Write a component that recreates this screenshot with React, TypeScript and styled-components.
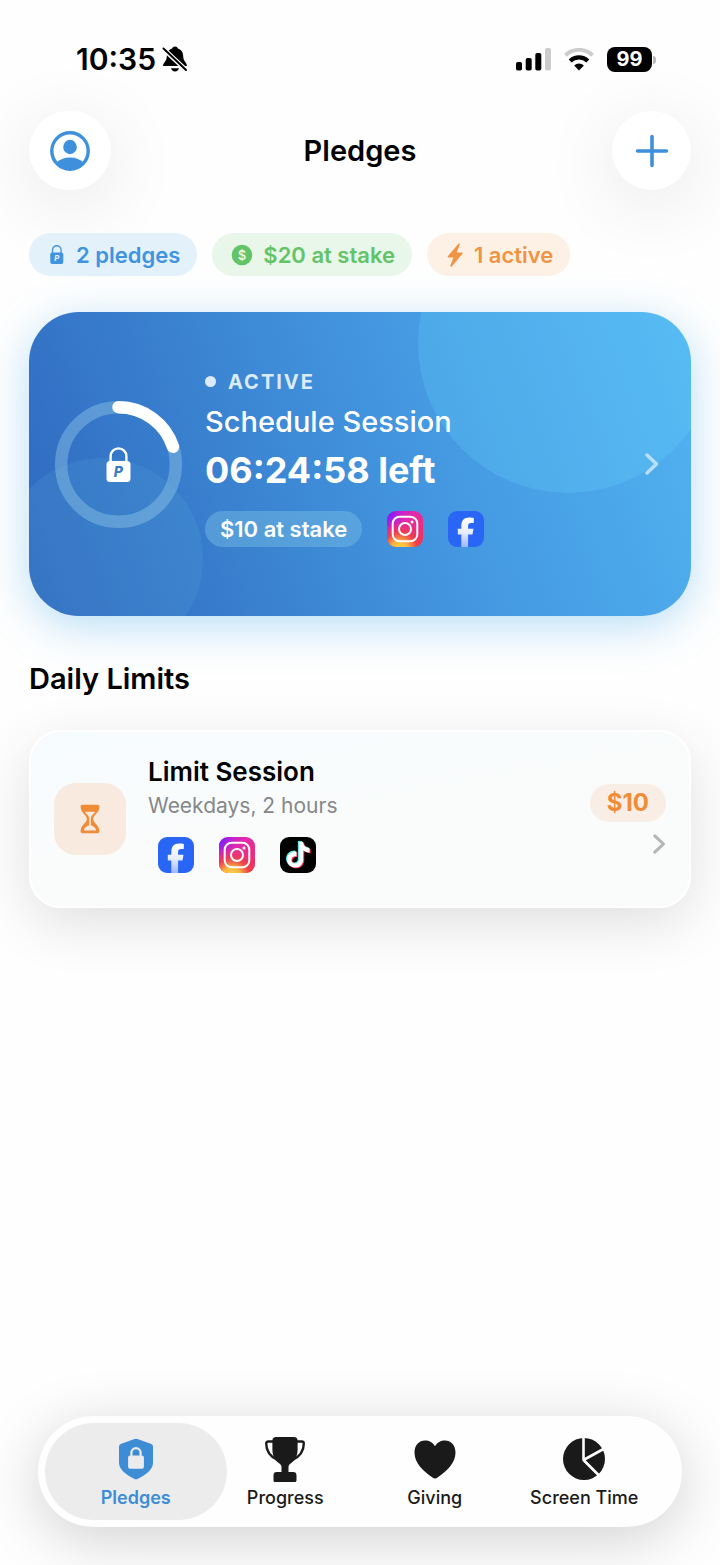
import React, { useId } from 'react';
import styled, { createGlobalStyle } from 'styled-components';
import { SiTiktok } from 'react-icons/si';

const GlobalStyle = createGlobalStyle`
  * {
    box-sizing: border-box;
  }

  body {
    margin: 0;
    background: #fefefe;
    font-family: Inter, 'Liberation Sans', sans-serif;
    color: #000;
  }

  h1, h2, h3, p {
    margin: 0;
  }

  button {
    border: none;
    padding: 0;
    background: transparent;
    font: inherit;
    cursor: pointer;
  }

  svg {
    display: block;
  }
`;

const Screen = styled.div`
  display: flex;
  flex-direction: column;
  min-height: 100vh;
  overflow: hidden;
`;

const StatusBar = styled.div`
  display: flex;
  align-items: center;
  justify-content: space-between;
  padding: 41px 64px 0 76px;
  height: 77px;
`;

const StatusGroup = styled.div<{ $gap: number }>`
  display: flex;
  align-items: center;
  gap: ${({ $gap }) => $gap}px;
`;

const Clock = styled.span`
  font-size: 30px;
  font-weight: 600;
  line-height: 36px;
`;

const Battery = styled.div`
  position: relative;
  width: 45px;
  height: 25px;
  margin-right: 4px;
  border-radius: 8px;
  background: #000;
  color: #fff;
  font-size: 20px;
  font-weight: 700;
  line-height: 25px;
  text-align: center;

  &::after {
    content: '';
    position: absolute;
    top: 9px;
    right: -4px;
    width: 3px;
    height: 8px;
    border-radius: 0 3px 3px 0;
    background: #bbb;
  }
`;

const Header = styled.header`
  display: grid;
  grid-template-columns: 82px 1fr 82px;
  align-items: center;
  padding: 0 29px;
  margin-top: 34px;
`;

const RoundButton = styled.button<{ $width: number }>`
  display: flex;
  align-items: center;
  justify-content: center;
  justify-self: end;
  width: ${({ $width }) => $width}px;
  height: 79px;
  border-radius: 41px;
  background: #fff;
  color: #3f90dc;
  box-shadow: 0 14px 76px rgba(0, 0, 0, 0.1);
`;

const Title = styled.h1`
  font-size: 29px;
  font-weight: 600;
  line-height: 36px;
  text-align: center;
`;

const Content = styled.main`
  display: flex;
  flex-direction: column;
  padding: 0 29px;
  margin-top: 43px;
`;

const Chips = styled.div`
  display: flex;
  gap: 15px;
`;

const Chip = styled.div<{ $color: string; $background: string }>`
  display: flex;
  align-items: center;
  gap: 10px;
  height: 43px;
  padding: 0 17px 0 19px;
  border-radius: 22px;
  background: ${({ $background }) => $background};
  color: ${({ $color }) => $color};
  font-size: 22px;
  font-weight: 600;
  line-height: 28px;
`;

const ChipIcon = styled.span`
  display: flex;
  justify-content: center;
  min-width: 18px;
`;

const CardGlow = styled.div`
  margin-top: 36px;
  border-radius: 50px;
  box-shadow: 0 10px 44px rgba(80, 175, 235, 0.4);
`;

const SessionCard = styled.article`
  position: relative;
  display: flex;
  align-items: center;
  height: 304px;
  padding: 0 32px 0 26px;
  border-radius: 50px;
  overflow: hidden;
  background: linear-gradient(70deg, #2f68bf 0%, #3a82d0 32%, #459ae2 62%, #52b4f1 100%);
  color: #fff;
`;

const Bubble = styled.span<{ $size: number; $tint: string }>`
  position: absolute;
  width: ${({ $size }) => $size}px;
  height: ${({ $size }) => $size}px;
  border-radius: 50%;
  background: ${({ $tint }) => $tint};
`;

const TopBubble = styled(Bubble)`
  top: -119px;
  right: -27px;
`;

const BottomBubble = styled(Bubble)`
  bottom: -44px;
  left: -28px;
`;

const Ring = styled.div`
  position: relative;
  flex: none;
`;

const RingLock = styled.span`
  position: absolute;
  inset: 0;
  display: flex;
  align-items: center;
  justify-content: center;
`;

const SessionBody = styled.div`
  position: relative;
  display: flex;
  flex-direction: column;
  flex: 1;
  margin-left: 23px;
  padding-bottom: 12px;
`;

const ActiveLabel = styled.p`
  display: flex;
  align-items: center;
  gap: 12px;
  font-size: 20px;
  font-weight: 700;
  line-height: 24px;
  letter-spacing: 2px;
  color: #dcebf9;

  &::before {
    content: '';
    width: 11px;
    height: 11px;
    border-radius: 50%;
    background: #dcebf9;
  }
`;

const SessionName = styled.h2`
  margin-top: 10px;
  font-size: 29px;
  font-weight: 500;
  line-height: 36px;
`;

const TimeLeft = styled.p`
  margin-top: 8px;
  font-size: 36px;
  font-weight: 700;
  line-height: 44px;
`;

const StakeRow = styled.div`
  display: flex;
  align-items: center;
  gap: 25px;
  margin-top: 19px;
`;

const StakePill = styled.span`
  padding: 4px 15px;
  border-radius: 18px;
  background: rgba(120, 190, 228, 0.45);
  font-size: 22px;
  font-weight: 600;
  line-height: 28px;
`;

const ChevronButton = styled.button<{ $color: string }>`
  position: relative;
  display: flex;
  color: ${({ $color }) => $color};
`;

const SectionTitle = styled.h2`
  margin-top: 45px;
  font-size: 29px;
  font-weight: 600;
  line-height: 36px;
`;

const LimitCard = styled.article`
  display: flex;
  align-items: center;
  height: 178px;
  margin-top: 33px;
  padding: 0 23px;
  border: 2px solid #fff;
  border-radius: 32px;
  background: linear-gradient(170deg, #f6fbfe 0%, #fafcfc 45%, #fafbfb 100%);
  box-shadow: 0 16px 56px rgba(0, 0, 0, 0.12);
`;

const LimitIcon = styled.div`
  display: flex;
  align-items: center;
  justify-content: center;
  flex: none;
  width: 72px;
  height: 72px;
  border-radius: 22px;
  background: #f8eade;
  color: #ee8c38;
`;

const LimitBody = styled.div`
  display: flex;
  flex-direction: column;
  flex: 1;
  margin-left: 22px;
  padding-bottom: 10px;
`;

const LimitName = styled.h3`
  font-size: 26px;
  font-weight: 600;
  line-height: 32px;
`;

const LimitRule = styled.p`
  margin-top: 4px;
  font-size: 21px;
  line-height: 28px;
  color: #858789;
`;

const Apps = styled.div`
  display: flex;
  gap: 25px;
  margin: 17px 0 0 10px;
`;

const LimitSide = styled.div`
  display: flex;
  flex-direction: column;
  align-items: flex-end;
  gap: 12px;
`;

const Amount = styled.span`
  padding: 5px 17px;
  border-radius: 20px;
  background: #f8eee5;
  color: #ee8c38;
  font-size: 24px;
  font-weight: 700;
  line-height: 28px;
`;

const TabBar = styled.nav`
  display: grid;
  grid-template-columns: repeat(4, 1fr);
  margin: auto 38px 38px;
  padding: 7px 23px;
  border-radius: 56px;
  background: #fefefe;
  box-shadow: 0 12px 60px rgba(0, 0, 0, 0.18);
`;

const Tab = styled.a<{ $active?: boolean }>`
  display: flex;
  flex-direction: column;
  align-items: center;
  height: 97px;
  margin: 0 -16px;
  padding-top: 13px;
  border-radius: 49px;
  background: ${({ $active }) => ($active ? '#ececec' : 'transparent')};
  color: ${({ $active }) => ($active ? '#3c8cd6' : '#1a1a1a')};
  font-size: 18px;
  font-weight: ${({ $active }) => ($active ? 600 : 500)};
  line-height: 22px;
  text-decoration: none;
`;

const TabIcon = styled.span`
  display: flex;
  align-items: center;
  height: 46px;
  margin-bottom: 5px;
`;

const BellOffIcon = () => (
  <svg width="26" height="26" viewBox="0 0 26 26" aria-hidden="true">
    <path
      d="M13 .5c1.500 0 2.500.9 2.800 2 3.800 1.200 5.400 4.200 5.400 7.700 0 5.300 3.800 6.300 3.800 9.800H1c0-3.500 3.800-4.500 3.800-9.800 0-3.500 1.600-6.500 5.400-7.700.3-1.100 1.300-2 2.800-2z"
      fill="#000"
    />
    <path d="M9 22.300h8c-.4 2-2 3.200-4 3.200s-3.600-1.200-4-3.200z" fill="#000" />
    <path d="M1 2.500l23.500 22" stroke="#fefefe" strokeWidth="4.600" />
    <path d="M1.500 2.500l22.500 21.500" stroke="#000" strokeWidth="2" strokeLinecap="round" />
  </svg>
);

const SignalIcon = () => (
  <svg width="35" height="23" viewBox="0 0 35 23" aria-hidden="true">
    <rect x="0" y="14" width="6" height="8.500" rx="1.800" />
    <rect x="9.700" y="10" width="6" height="12.500" rx="1.800" />
    <rect x="19.300" y="5" width="6" height="17.500" rx="1.800" />
    <rect x="29" y="0" width="6" height="22.500" rx="1.800" fill="#ccc" />
  </svg>
);

const WifiIcon = () => (
  <svg width="30" height="23" viewBox="0 0 30 23" fill="none" aria-hidden="true">
    <path d="M1.500 7.300a19.500 19.500 0 0 1 27 0" stroke="#ccc" strokeWidth="4" />
    <path d="M6.200 12.900a12.800 12.800 0 0 1 17.600 0" stroke="#000" strokeWidth="4.200" />
    <path d="M15 22.500l-4.900-4.900a7 7 0 0 1 9.800 0z" fill="#000" />
  </svg>
);

const ProfileIcon = () => (
  <svg width="40" height="40" viewBox="0 0 40 40" aria-hidden="true">
    <circle cx="20" cy="20" r="18.200" fill="none" stroke="currentColor" strokeWidth="3.400" />
    <ellipse cx="20" cy="16" rx="6.800" ry="7.200" fill="currentColor" />
    <path d="M6.500 31.500C9.500 28.500 14 26.500 20 26.500s10.500 2 13.500 5C30 36 25.500 38.500 20 38.500S10 36 6.500 31.500z" fill="currentColor" />
  </svg>
);

const PlusIcon = () => (
  <svg width="34" height="34" viewBox="0 0 34 34" aria-hidden="true">
    <path d="M17 2.500v29M2.500 17h29" stroke="currentColor" strokeWidth="3.600" strokeLinecap="round" />
  </svg>
);

const PledgeLockIcon = ({ height, letter }: { height: number; letter: string }) => (
  <svg width={(height * 25) / 35} height={height} viewBox="0 0 25 35" aria-hidden="true">
    <path d="M4.600 15V9.300a7.900 7.900 0 0 1 15.800 0V15" fill="none" stroke="currentColor" strokeWidth="2.400" />
    <rect x="0.500" y="14" width="24" height="21" rx="3.500" fill="currentColor" />
    <text x="12.300" y="29.800" fontSize="14" fontWeight="800" fontStyle="italic" textAnchor="middle" fill={letter}>
      P
    </text>
  </svg>
);

const CoinIcon = () => (
  <svg width="22" height="22" viewBox="0 0 22 22" aria-hidden="true">
    <circle cx="11" cy="11" r="10.300" fill="currentColor" />
    <text x="11" y="15.500" fontSize="13" fontWeight="600" textAnchor="middle" fill="#e9f6ea">
      $
    </text>
  </svg>
);

const BoltIcon = () => (
  <svg width="16" height="24" viewBox="0 0 16 24" aria-hidden="true">
    <path
      d="M11.500.8L.8 13.200c-.5.600-.2 1.200.5 1.200h5L3.400 22.600c-.4 1.100.7 1.600 1.400.8L15.300 10.900c.5-.6.200-1.300-.5-1.300H9.700l3.100-8c.4-1.100-.6-1.600-1.300-.8z"
      fill="currentColor"
    />
  </svg>
);

const ProgressRing = ({ value }: { value: number }) => (
  <svg width="127" height="127" viewBox="0 0 127 127" fill="none" role="img" aria-label="Session progress">
    <circle cx="63.500" cy="63.500" r="57.300" stroke="#8fc6e6" strokeOpacity="0.450" strokeWidth="12.400" />
    <circle
      cx="63.500"
      cy="63.500"
      r="57.300"
      stroke="#fff"
      strokeWidth="12.400"
      strokeLinecap="round"
      pathLength={100}
      strokeDasharray={`${value} 100`}
      transform="rotate(-90 63.500 63.500)"
    />
  </svg>
);

const ChevronIcon = ({ size }: { size: number }) => (
  <svg width={(size * 14) / 22} height={size} viewBox="0 0 14 22" fill="none" aria-hidden="true">
    <path d="M2 2l9.500 9L2 20" stroke="currentColor" strokeWidth="3.400" strokeLinecap="round" strokeLinejoin="round" />
  </svg>
);

const HourglassIcon = () => (
  <svg width="20" height="30" viewBox="0 0 20 30" aria-hidden="true">
    <path
      fillRule="evenodd"
      fill="currentColor"
      d="M2.500.8h15c1.300 0 2 .8 1.900 2.200-.3 6.200-6.200 7.800-6.200 12s5.900 5.800 6.200 12c.1 1.400-.6 2.200-1.900 2.200h-15c-1.300 0-2-.8-1.900-2.200C.9 20.800 6.800 19.200 6.800 15S.9 9.200.6 3C.5 1.600 1.200.8 2.500.8zM4.800 7.800h10.400c-1.500 2.400-4.400 3.600-4.400 7.200v6.300c2.700.8 4.700 2.600 5.400 5.100H3.800c.7-2.500 2.700-4.300 5.400-5.100V15c0-3.600-2.900-4.800-4.400-7.200z"
    />
  </svg>
);

const InstagramIcon = () => {
  const id = useId();
  return (
    <svg width="36" height="36" viewBox="0 0 36 36" role="img" aria-label="Instagram">
      <defs>
        <linearGradient id={`${id}base`} x1="0" y1="0" x2="1" y2="1">
          <stop offset="0" stopColor="#b51fe6" />
          <stop offset="0.450" stopColor="#e52aa6" />
          <stop offset="1" stopColor="#f2304f" />
        </linearGradient>
        <radialGradient id={`${id}warm`} cx="0.350" cy="1.100" r="0.850">
          <stop offset="0" stopColor="#ffdc4a" />
          <stop offset="0.300" stopColor="#f9b83e" />
          <stop offset="0.600" stopColor="#f0433f" stopOpacity="0.800" />
          <stop offset="1" stopColor="#ec306f" stopOpacity="0" />
        </radialGradient>
        <radialGradient id={`${id}cool`} cx="0" cy="0.080" r="0.450">
          <stop offset="0" stopColor="#6a1cff" />
          <stop offset="1" stopColor="#9a20f0" stopOpacity="0" />
        </radialGradient>
      </defs>
      <rect width="36" height="36" rx="9" fill={`url(#${id}base)`} />
      <rect width="36" height="36" rx="9" fill={`url(#${id}warm)`} />
      <rect width="36" height="36" rx="9" fill={`url(#${id}cool)`} />
      <g fill="none" stroke="#fff" strokeWidth="2">
        <rect x="5.700" y="5.700" width="24.600" height="24.600" rx="7" />
        <circle cx="18" cy="18" r="6" />
      </g>
      <circle cx="25" cy="11" r="1.500" fill="#fff" />
    </svg>
  );
};

const FacebookIcon = () => {
  const id = useId();
  return (
    <svg width="36" height="36" viewBox="0 0 36 36" role="img" aria-label="Facebook">
      <defs>
        <linearGradient id={id} x1="0" y1="0" x2="0" y2="1">
          <stop offset="0" stopColor="#fff" />
          <stop offset="0.500" stopColor="#e8eefe" />
          <stop offset="1" stopColor="#9bb8fb" />
        </linearGradient>
      </defs>
      <rect width="36" height="36" rx="9" fill="#2a66f6" />
      <path
        d="M13.300 36V23.500h-3.500v-5.700h3.500v-2.600c0-5.600 2.500-8.700 8-8.700 1.600 0 3.400.2 4.500.4v5.200h-2.500c-2.500 0-3.200 1.100-3.200 3.100v2.600h5.400l-1 5.700h-4.400V36z"
        fill={`url(#${id})`}
      />
    </svg>
  );
};

const TiktokIcon = () => (
  <svg width="36" height="36" viewBox="0 0 36 36" role="img" aria-label="TikTok">
    <rect width="36" height="36" rx="9" fill="#000" />
    <SiTiktok x="4.300" y="3.800" size={26} color="#4de8e4" />
    <SiTiktok x="6.300" y="5.600" size={26} color="#f5315c" />
    <SiTiktok x="5.300" y="4.700" size={26} color="#fff" />
  </svg>
);

const ShieldIcon = () => (
  <svg width="34" height="42" viewBox="0 0 34 42" aria-hidden="true">
    <path
      d="M15.600.9a4 4 0 0 1 2.800 0l13.300 4.800A3 3 0 0 1 34 8.600V24.500c0 7-6.500 12-15.500 16.400a3.500 3.500 0 0 1-3 0C6.500 36.500 0 31.500 0 24.500V8.600a3 3 0 0 1 2.300-2.900z"
      fill="currentColor"
    />
    <path d="M12.400 19v-4.300a4.600 4.600 0 0 1 9.200 0V19" fill="none" stroke="#ececec" strokeWidth="2.200" />
    <rect x="9.100" y="17.500" width="15.800" height="13.300" rx="2" fill="#ececec" />
  </svg>
);

const TrophyIcon = () => (
  <svg width="40" height="45" viewBox="0 0 40 45" aria-hidden="true">
    <path
      d="M11 0h18c2.300 0 3.600 1.200 3.600 3.500v9c0 6.500-2.600 10.500-6 13.300-2 1.600-3.100 2.600-3.100 4.200v5h4.700c2.200 0 3.300 1.200 3.300 3.300v5.200c0 .9-.6 1.500-1.500 1.500H10c-.9 0-1.500-.6-1.500-1.500v-5.200c0-2.100 1.100-3.300 3.300-3.300h4.700v-5c0-1.600-1.100-2.600-3.100-4.200-3.400-2.800-6-6.800-6-13.300v-9C7.400 1.200 8.700 0 11 0z"
      fill="currentColor"
    />
    <path
      d="M9 4.500H3.200C2 4.500 1.200 5.200 1.200 6.500c0 7.500 4 13 11.300 16.500M31 4.500h5.800c1.200 0 2 .7 2 2 0 7.500-4 13-11.300 16.500"
      fill="none"
      stroke="currentColor"
      strokeWidth="2.400"
    />
  </svg>
);

const HeartIcon = () => (
  <svg width="42" height="39" viewBox="0 0 42 39" aria-hidden="true">
    <path
      d="M21 6.200C23 2.500 27 .5 31 .5c6 0 10.500 4.800 10.500 12 0 10.500-8.500 18.300-18 25-1.800 1.200-3.200 1.200-5 0C9 30.800.5 23 .5 12.500.5 5.300 5 .5 11 .5c4 0 8 2 10 5.700z"
      fill="currentColor"
    />
  </svg>
);

const PieIcon = () => (
  <svg width="42" height="42" viewBox="0 0 42 42" aria-hidden="true">
    <circle cx="21" cy="21" r="21" fill="currentColor" />
    <path d="M20.500-1v23.500M20.500 22l20-11M20.500 22l15 15" stroke="#fefefe" strokeWidth="2.600" fill="none" />
  </svg>
);

const tabs = [
  { label: 'Pledges', icon: <ShieldIcon /> },
  { label: 'Progress', icon: <TrophyIcon /> },
  { label: 'Giving', icon: <HeartIcon /> },
  { label: 'Screen Time', icon: <PieIcon /> },
];

const App: React.FC = () => {
  return (
    <Screen>
      <GlobalStyle />
      <StatusBar>
        <StatusGroup $gap={6}>
          <Clock>10:35</Clock>
          <BellOffIcon />
        </StatusGroup>
        <StatusGroup $gap={13}>
          <SignalIcon />
          <WifiIcon />
          <Battery>99</Battery>
        </StatusGroup>
      </StatusBar>

      <Header>
        <RoundButton $width={82} aria-label="Profile">
          <ProfileIcon />
        </RoundButton>
        <Title>Pledges</Title>
        <RoundButton $width={79} aria-label="Add pledge">
          <PlusIcon />
        </RoundButton>
      </Header>

      <Content>
        <Chips>
          <Chip $color="#4093de" $background="#e3f1fb">
            <ChipIcon>
              <PledgeLockIcon height={19} letter="#e3f1fb" />
            </ChipIcon>
            2 pledges
          </Chip>
          <Chip $color="#62c466" $background="#e9f6ea">
            <ChipIcon>
              <CoinIcon />
            </ChipIcon>
            $20 at stake
          </Chip>
          <Chip $color="#f09343" $background="#fdf1e6">
            <ChipIcon>
              <BoltIcon />
            </ChipIcon>
            1 active
          </Chip>
        </Chips>

        <CardGlow>
          <SessionCard>
            <TopBubble $size={300} $tint="rgba(110, 218, 255, 0.22)" />
            <BottomBubble $size={202} $tint="rgba(85, 165, 215, 0.2)" />
            <Ring>
              <ProgressRing value={20} />
              <RingLock>
                <PledgeLockIcon height={35} letter="#3a7acb" />
              </RingLock>
            </Ring>
            <SessionBody>
              <ActiveLabel>ACTIVE</ActiveLabel>
              <SessionName>Schedule Session</SessionName>
              <TimeLeft>06:24:58 left</TimeLeft>
              <StakeRow>
                <StakePill>$10 at stake</StakePill>
                <InstagramIcon />
                <FacebookIcon />
              </StakeRow>
            </SessionBody>
            <ChevronButton $color="#b9e0f8" aria-label="Open Schedule Session">
              <ChevronIcon size={22} />
            </ChevronButton>
          </SessionCard>
        </CardGlow>

        <SectionTitle>Daily Limits</SectionTitle>

        <LimitCard>
          <LimitIcon>
            <HourglassIcon />
          </LimitIcon>
          <LimitBody>
            <LimitName>Limit Session</LimitName>
            <LimitRule>Weekdays, 2 hours</LimitRule>
            <Apps>
              <FacebookIcon />
              <InstagramIcon />
              <TiktokIcon />
            </Apps>
          </LimitBody>
          <LimitSide>
            <Amount>$10</Amount>
            <ChevronButton $color="#b5b6b7" aria-label="Open Limit Session">
              <ChevronIcon size={20} />
            </ChevronButton>
          </LimitSide>
        </LimitCard>
      </Content>

      <TabBar>
        {tabs.map((tab, index) => (
          <Tab key={tab.label} href="#" $active={index === 0}>
            <TabIcon>{tab.icon}</TabIcon>
            {tab.label}
          </Tab>
        ))}
      </TabBar>
    </Screen>
  );
};

export default App;
